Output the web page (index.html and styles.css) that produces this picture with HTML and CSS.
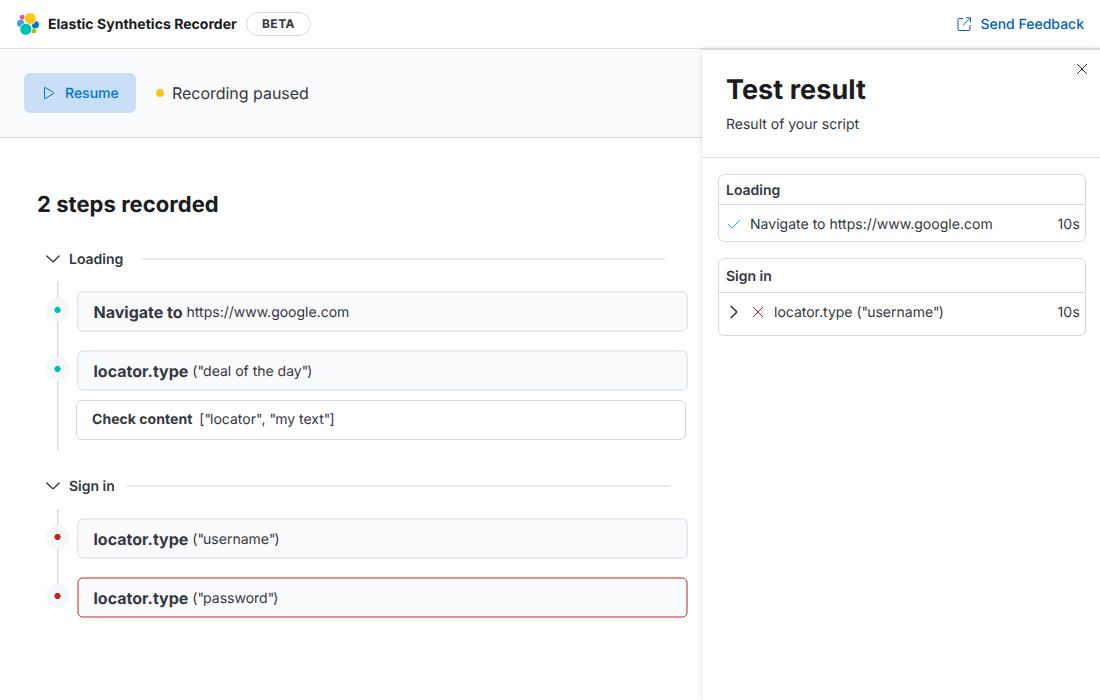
FILE: index.html
```html
<!DOCTYPE html>
<html lang="en">
<head>
<meta charset="utf-8">
<title>Elastic Synthetics Recorder</title>
<link rel="stylesheet" href="styles.css">
</head>
<body>
<header class="topbar">
  <svg class="logo" width="22" height="22" viewBox="0 0 22 22">
    <circle fill="#F04E98" cx="5.300" cy="4.300" r="2.500"/>
    <circle fill="#36A2EF" cx="3.700" cy="10.300" r="3.600"/>
    <circle fill="#93C90E" cx="16.800" cy="17.800" r="2.500"/>
    <circle fill="#0077CC" cx="18.300" cy="11.700" r="3.600"/>
    <g stroke="#fff" stroke-width=".8">
      <circle fill="#FEC514" cx="13.200" cy="5.600" r="5.900"/>
      <circle fill="#00BFB3" cx="8.800" cy="16.300" r="6"/>
    </g>
  </svg>
  <span class="brand">Elastic Synthetics Recorder</span>
  <span class="beta">BETA</span>
  <a class="feedback">
    <svg width="14" height="14" viewBox="0 0 14 14" fill="none" stroke="currentColor"><path d="M6 1.500H2A1 1 0 0 0 1 2.500V12.500A1 1 0 0 0 2 13.500H12A1 1 0 0 0 13 12.500V8M9 .8H13.500V5.300M13.300 1L6 8.300"/></svg>
    <span class="low">Send Feedback</span>
  </a>
</header>
<div class="layout">
  <main class="main">
    <div class="toolbar">
      <button class="resume">
        <svg width="12" height="14" viewBox="0 0 12 14" fill="none" stroke="currentColor"><path d="M1.500 1.800V12.200Q1.500 12.900 2.200 12.500L10.500 7.600Q11.300 7 10.500 6.400L2.200 1.500Q1.500 1.100 1.500 1.800Z"/></svg>
        <span class="low">Resume</span>
      </button>
      <span class="status-dot"></span>
      <span class="status">Recording paused</span>
    </div>
    <div class="content">
      <h1 class="heading">2 steps recorded</h1>
      <section class="step step-first">
        <div class="step-head">
          <svg width="14" height="8" viewBox="0 0 14 8" fill="none" stroke="#343741" stroke-width="1.300" stroke-linecap="round"><path d="M.8 1L6.300 6.300Q7 7 7.700 6.300L13.200 1"/></svg>
          <span class="step-name">Loading</span><span class="rule"></span>
        </div>
        <div class="timeline">
          <div class="row"><span class="node ok"></span><div class="action"><b class="verb">Navigate to</b><span class="arg">https://www.google.com</span></div></div>
          <div class="row"><span class="node ok"></span><div class="action"><b class="verb">locator.type</b><span class="arg">(<i>"</i>deal of the day<i>"</i>)</span></div></div>
          <div class="assertion"><b class="check">Check content</b><span class="check-arg">[<i>"</i>locator<i>"</i>, <i>"</i>my text<i>"</i>]</span></div>
        </div>
      </section>
      <section class="step step-second">
        <div class="step-head">
          <svg width="14" height="8" viewBox="0 0 14 8" fill="none" stroke="#343741" stroke-width="1.300" stroke-linecap="round"><path d="M.8 1L6.300 6.300Q7 7 7.700 6.300L13.200 1"/></svg>
          <span class="step-name">Sign in</span><span class="rule"></span>
        </div>
        <div class="timeline">
          <div class="row"><span class="node bad"></span><div class="action"><b class="verb">locator.type</b><span class="arg">(<i>"</i>username<i>"</i>)</span></div></div>
          <div class="row"><span class="node bad"></span><div class="action failed"><b class="verb">locator.type</b><span class="arg">(<i>"</i>password<i>"</i>)</span></div></div>
        </div>
      </section>
    </div>
  </main>
  <aside class="panel">
    <div class="panel-head">
      <div>
        <h2 class="panel-title">Test result</h2>
        <p class="panel-sub">Result of your script</p>
      </div>
      <svg class="close" width="12" height="12" viewBox="0 0 12 12" fill="none" stroke="#343741"><path d="M1 1L11 11M11 1L1 11"/></svg>
    </div>
    <div class="results">
      <div class="card">
        <div class="card-head">Loading</div>
        <div class="card-row">
          <svg class="tick" width="14" height="10" viewBox="0 0 14 10" fill="none" stroke="#00BFB3"><path d="M1 5.200L4.600 8.700Q5 9 5.400 8.700L12.900 1.200"/></svg>
          <span class="low url">Navigate to https://www.google.com</span><span class="time">10s</span>
        </div>
      </div>
      <div class="card card-tall">
        <div class="card-head">Sign in</div>
        <div class="card-row">
          <svg class="expand" width="8" height="14" viewBox="0 0 8 14" fill="none" stroke="#343741" stroke-width="1.500" stroke-linecap="round"><path d="M1 1.200L6.300 6.400Q6.900 7 6.300 7.600L1 12.800"/></svg>
          <svg class="cross" width="12" height="12" viewBox="0 0 12 12" fill="none" stroke="#BD271E"><path d="M1 1L11 11M11 1L1 11"/></svg>
          <span class="low">locator.type (<i>"</i>username<i>"</i>)</span><span class="time">10s</span>
        </div>
      </div>
    </div>
  </aside>
</div>
</body>
</html>
```
FILE: styles.css
```css
* { box-sizing: border-box; }
body {
  margin: 0;
  height: 700px;
  overflow: hidden;
  display: flex;
  flex-direction: column;
  background: #fff;
  color: #343741;
  font: 14px/20px Inter, sans-serif;
  text-rendering: geometricPrecision;
}
svg { display: block; flex: none; }
h1, h2, p { margin: 0; }
span, b { white-space: nowrap; }
i { font-style: normal; letter-spacing: -.9px; }
.low { padding-top: 2px; }

.topbar {
  flex: none;
  height: 49px;
  display: flex;
  align-items: center;
  padding: 0 16px 0 17px;
  border-bottom: 1px solid #dcdee4;
}
.brand { margin-left: 9px; padding-top: 2px; width: 189px; font-weight: 700; color: #1a1c21; letter-spacing: .03px; }
.beta {
  height: 24px;
  width: 65px;
  margin-left: 9px;
  border: 1px solid #d3dae6;
  border-radius: 12px;
  font-size: 12px;
  line-height: 22px;
  font-weight: 700;
  letter-spacing: .5px;
  text-align: center;
}
.feedback {
  margin-left: auto;
  display: flex;
  align-items: center;
  gap: 9px;
  color: #0061c2;
  font-weight: 500;
}

.layout { flex: 1; display: grid; grid-template-columns: 702px 398px; }
.toolbar {
  height: 89px;
  display: flex;
  align-items: center;
  padding-left: 24px;
  background: #fafbfd;
  border-bottom: 1px solid #d3dae6;
}
.resume {
  width: 112px;
  height: 40px;
  padding: 0 0 0 19px;
  display: flex;
  align-items: center;
  gap: 10px;
  border: 0;
  border-radius: 6px;
  background: #c9dff7;
  color: #0077cc;
  font: 500 14px/20px Inter, sans-serif;
  text-rendering: inherit;
}
.status-dot {
  width: 8px;
  height: 8px;
  margin: 0 8px 0 20px;
  border-radius: 50%;
  background: #fec514;
}
.status { font-size: 16px; line-height: 24px; letter-spacing: -.03px; }

.content { padding: 51px 0 0 37px; }
.heading { font-size: 22px; line-height: 32px; font-weight: 700; color: #1a1c21; letter-spacing: .05px; }
.step-first { margin-top: 28px; }
.step-second { margin-top: 26px; }
.step-head { display: flex; align-items: center; height: 20px; padding-left: 9px; }
.step-name { margin: 1px 0 0 9px; width: 54px; font-weight: 600; padding-top: 1px; }
.rule { height: 2px; background: #e9edf3; }
.step-first .rule { width: 524px; margin-left: 18px; }
.step-second .step-name { width: 46px; }
.step-second .rule { width: 544px; margin-left: 11px; }
.timeline {
  margin: 13px 0 0 9px;
  padding-top: 9px;
  background: linear-gradient(90deg, #d3dae6 1px, #eef1f5 1px) 11px 0 / 2px 100% no-repeat;
}
.step-first .timeline { height: 168px; }
.step-second .timeline { background-size: 2px 87px; }
.row { display: flex; align-items: flex-start; height: 59px; }
.node {
  flex: none;
  width: 24px;
  height: 24px;
  margin: 7px 7px 0 0;
  border-radius: 50%;
  transform: translateX(-.5px);
}
.ok { background: radial-gradient(circle, #00bfb3 2.8px, #f5f7fa 3.4px); }
.bad { background: radial-gradient(circle, #bd271e 2.8px, #f5f7fa 3.4px); }
.action {
  width: 610px;
  height: 40px;
  display: flex;
  align-items: center;
  padding-left: 15px;
  border: 1px solid #d3dae6;
  border-radius: 5px;
  background: #fafbfd;
  transform: translate(.5px, .5px);
}
.failed { border-color: #bd271e; }
.verb { font-size: 16px; font-weight: 700; }
.arg { margin: 1px 0 0 4px; }
.assertion {
  width: 610px;
  height: 40px;
  margin: -9px 0 0 30px;
  display: flex;
  align-items: center;
  padding-left: 15px;
  border: 1px solid #d3dae6;
  border-radius: 6px;
}
.check { font-weight: 700; letter-spacing: .04px; }
.check-arg { margin-left: 7px; }

.panel {
  margin-top: -1px;
  border-top: 2px solid #d6d8df;
  background: #fff;
  box-shadow: 0 0 2px rgba(0, 0, 0, .16), -2px 0 8px rgba(0, 0, 0, .035);
}
.panel-head {
  height: 108px;
  display: flex;
  justify-content: space-between;
  padding: 20px 12px 0 24px;
  border-bottom: 1px solid #d3dae6;
}
.panel-title { font-size: 27px; line-height: 40px; font-weight: 700; color: #1a1c21; letter-spacing: .06px; }
.panel-sub { margin-top: 5px; }
.close { margin-top: -7px; }
.results { padding: 16px 14px 0 16px; }
.card { height: 68px; border: 1px solid #d3dae6; border-radius: 6px; }
.card-head { height: 30px; padding: 6px 7px 0; border-bottom: 1px solid #d3dae6; font-weight: 600; }
.card-row { display: flex; align-items: center; height: 37px; padding: 0 5px 0 8px; }
.url { letter-spacing: .02px; }
.time { margin-left: auto; padding-top: 2px; letter-spacing: .2px; }
.tick { margin-right: 9px; }
.card-tall { height: 78px; margin-top: 16px; }
.card-tall .card-head { height: 34px; padding-top: 8px; }
.card-tall .card-row { padding-left: 11px; }
.cross { margin: 0 10px 0 14px; }
```
